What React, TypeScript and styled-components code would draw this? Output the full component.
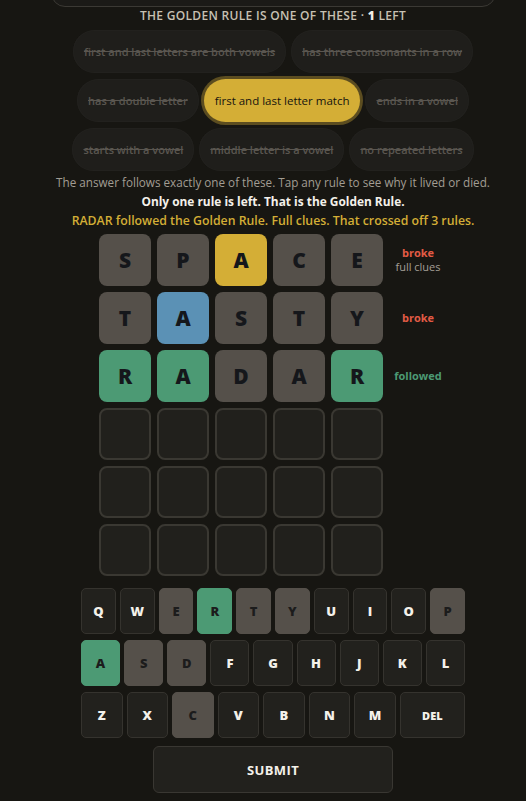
import React from "react";
import styled, { createGlobalStyle } from "styled-components";

type Tone = "gray" | "gold" | "blue" | "green" | "empty";
type KeyTone = "plain" | "gray" | "green";

interface Guess {
	tiles: { letter: string; tone: Tone }[];
	verdict?: "broke" | "followed";
	note?: string;
}

const GlobalStyle = createGlobalStyle`
	html, body {
		margin: 0;
		padding: 0;
		background: #171612;
	}
	body {
		font-family: "Open Sans", "Noto Sans", sans-serif;
		color: #e8e4da;
		overflow: hidden;
	}
`;

const tileColors: Record<Tone, string> = {
	gray: "#55504a",
	gold: "#d4ae36",
	blue: "#5b91b5",
	green: "#4c9a74",
	empty: "#21201c",
};

const keyColors: Record<KeyTone, string> = {
	plain: "#22211d",
	gray: "#55504a",
	green: "#4c9a74",
};

const rules = [
	{ text: "first and last letters are both vowels", golden: false },
	{ text: "has three consonants in a row", golden: false },
	{ text: "has a double letter", golden: false },
	{ text: "first and last letter match", golden: true },
	{ text: "ends in a vowel", golden: false },
	{ text: "starts with a vowel", golden: false },
	{ text: "middle letter is a vowel", golden: false },
	{ text: "no repeated letters", golden: false },
];

const mk = (word: string, tones: Tone[]) =>
	word.split("").map((letter, i) => ({ letter, tone: tones[i] }));

const guesses: Guess[] = [
	{
		tiles: mk("SPACE", ["gray", "gray", "gold", "gray", "gray"]),
		verdict: "broke",
		note: "full clues",
	},
	{ tiles: mk("TASTY", ["gray", "blue", "gray", "gray", "gray"]), verdict: "broke" },
	{ tiles: mk("RADAR", ["green", "green", "gray", "gray", "green"]), verdict: "followed" },
];

const keyStates: Record<string, KeyTone> = {
	E: "gray",
	R: "green",
	T: "gray",
	Y: "gray",
	P: "gray",
	A: "green",
	S: "gray",
	D: "gray",
	C: "gray",
};

const keyRows = ["QWERTYUIOP".split(""), "ASDFGHJKL".split(""), [..."ZXCVBNM".split(""), "DEL"]];

const App = () => {
	const rows: Guess[] = [...guesses];
	while (rows.length < 6) {
		rows.push({ tiles: mk("     ", Array(5).fill("empty")) });
	}
	return (
		<Page>
			<GlobalStyle />
			<TopCard />
			<Heading>
				The Golden Rule is one of these · <strong>1</strong> left
			</Heading>
			<Chips>
				{rules.map((r) => (
					<Chip key={r.text} $golden={r.golden}>
						{r.text}
					</Chip>
				))}
			</Chips>
			<Hint>The answer follows exactly one of these. Tap any rule to see why it lived or died.</Hint>
			<Notice>Only one rule is left. That is the Golden Rule.</Notice>
			<Result>RADAR followed the Golden Rule. Full clues. That crossed off 3 rules.</Result>

			<Board>
				{rows.map((g, r) => (
					<BoardRow key={r}>
						{g.tiles.map((t, c) => (
							<Tile key={c} $tone={t.tone}>
								{t.letter.trim()}
							</Tile>
						))}
						<Verdict>
							{g.verdict && <VerdictWord $kind={g.verdict}>{g.verdict}</VerdictWord>}
							{g.note && <VerdictNote>{g.note}</VerdictNote>}
						</Verdict>
					</BoardRow>
				))}
			</Board>

			<Keyboard>
				{keyRows.map((row, i) => (
					<KeyRow key={i}>
						{row.map((k) => (
							<Key key={k} $tone={keyStates[k] || "plain"} $wide={k === "DEL"}>
								{k}
							</Key>
						))}
					</KeyRow>
				))}
				<Submit>SUBMIT</Submit>
			</Keyboard>
		</Page>
	);
};

export default App;

const Page = styled.div`
	width: 506px;
	margin-left: 20px;
	display: flex;
	flex-direction: column;
	align-items: center;

	& > * {
		flex-shrink: 0;
	}
`;

const TopCard = styled.div`
	width: 445px;
	height: 40px;
	margin-top: -33px;
	box-sizing: border-box;
	border: 1.5px solid #3b3934;
	border-radius: 14px;
	background: #1b1a17;
`;

const Heading = styled.div`
	font-size: 12px;
	font-weight: 600;
	letter-spacing: 0.3px;
	text-transform: uppercase;
	color: #c7c1b3;
	line-height: 17px;
	white-space: nowrap;

	strong {
		color: #f2efe6;
		font-weight: 800;
	}
`;

const Chips = styled.div`
	width: 412px;
	margin-top: 6px;
	display: flex;
	flex-wrap: wrap;
	justify-content: center;
	gap: 6px 5px;
`;

const Chip = styled.div<{ $golden: boolean }>`
	height: 43px;
	box-sizing: border-box;
	padding: 0 11px;
	display: flex;
	align-items: center;
	border-radius: 22px;
	font-size: ${(p) => (p.$golden ? "11.5px" : "11px")};
	font-weight: ${(p) => (p.$golden ? 500 : 600)};
	white-space: nowrap;
	background: ${(p) => (p.$golden ? "#d4ae36" : "#1f1e1b")};
	color: ${(p) => (p.$golden ? "#16140f" : "#5a5650")};
	text-decoration: ${(p) => (p.$golden ? "none" : "line-through")};
	box-shadow: ${(p) => (p.$golden ? "0 0 0 3px #5c4d20" : "inset 0 0 0 1px #22211e")};
`;

const Hint = styled.div`
	margin-top: 2px;
	font-size: 11.7px;
	line-height: 19px;
	color: #a29d93;
	white-space: nowrap;
`;

const Notice = styled.div`
	font-size: 11.9px;
	line-height: 19px;
	font-weight: 700;
	color: #f4f1ea;
	white-space: nowrap;
`;

const Result = styled.div`
	font-size: 12.3px;
	line-height: 19px;
	font-weight: 600;
	color: #d4ae36;
	white-space: nowrap;
`;

const Board = styled.div`
	margin-top: 4px;
	display: flex;
	flex-direction: column;
	gap: 6px;
`;

const BoardRow = styled.div`
	display: grid;
	grid-template-columns: repeat(5, 52px) 58px;
	gap: 6px;
`;

const Tile = styled.div<{ $tone: Tone }>`
	height: 52px;
	box-sizing: border-box;
	border-radius: 8px;
	background: ${(p) => tileColors[p.$tone]};
	border: ${(p) => (p.$tone === "empty" ? "2px solid #3a3832" : "none")};
	display: flex;
	align-items: center;
	justify-content: center;
	font-size: 21px;
	font-weight: 800;
	color: #15171b;
`;

const Verdict = styled.div`
	display: flex;
	flex-direction: column;
	align-items: center;
	justify-content: center;
	font-size: 11px;
	line-height: 14px;
	white-space: nowrap;
`;

const VerdictWord = styled.span<{ $kind: "broke" | "followed" }>`
	font-weight: 700;
	color: ${(p) => (p.$kind === "broke" ? "#e25b45" : "#4c9a74")};
`;

const VerdictNote = styled.span`
	color: #a49f95;
`;

const Keyboard = styled.div`
	width: 384px;
	margin-top: 12px;
	display: flex;
	flex-direction: column;
	align-items: center;
	gap: 6px;
`;

const KeyRow = styled.div`
	width: 100%;
	display: flex;
	gap: 4px;
`;

const Key = styled.div<{ $tone: KeyTone; $wide: boolean }>`
	flex: ${(p) => (p.$wide ? "1.6 1 0" : "1 1 0")};
	height: 46px;
	box-sizing: border-box;
	border-radius: 5px;
	background: ${(p) => keyColors[p.$tone]};
	border: 1px solid ${(p) => (p.$tone === "plain" ? "#35332e" : keyColors[p.$tone])};
	display: flex;
	align-items: center;
	justify-content: center;
	font-size: ${(p) => (p.$wide ? "11px" : "13px")};
	font-weight: 800;
	color: ${(p) => (p.$tone === "plain" ? "#f4f1ea" : "#1c1c1c")};
`;

const Submit = styled.div`
	margin-top: 2px;
	width: 240px;
	height: 47px;
	box-sizing: border-box;
	border-radius: 6px;
	background: #22211d;
	border: 1px solid #393732;
	display: flex;
	align-items: center;
	justify-content: center;
	font-size: 13px;
	font-weight: 700;
	letter-spacing: 0.4px;
	color: #f4f1ea;
`;
